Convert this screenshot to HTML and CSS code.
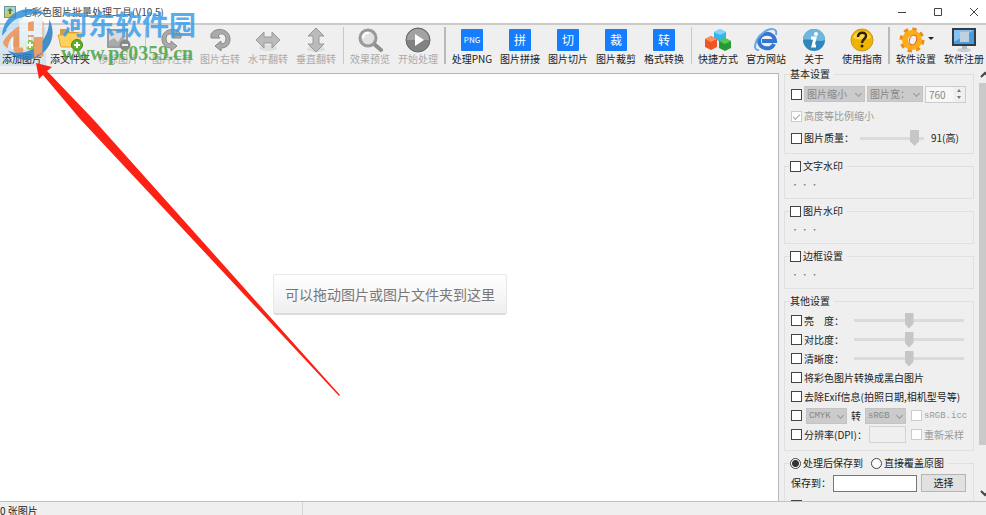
FILE: index.html
```html
<!DOCTYPE html>
<html lang="zh-CN">
<head>
    <meta charset="UTF-8">
    <meta name="viewport" content="width=device-width, initial-scale=1.0">
    <title>七彩色图片批量处理工具(V10.5)</title>
    <link rel="stylesheet" href="styles.css">
</head>
<body>
    <header class="titlebar">
        <svg class="app-icon" width="12" height="12" viewBox="0 0 12 12"><rect x=".5" y=".5" width="11" height="11" fill="#a9cfe0" stroke="#6f9a8a"/><path d="M1 11V8l3-2 7 3v2z" fill="#d9c35a"/><path d="M6 2l3 3H7v3H5V5H3z" fill="#3f8f2d"/></svg>
        <h1>七彩色图片批量处理工具(V10.5)</h1>
        <div class="window-buttons">
            <button aria-label="最小化"><svg width="10" height="10"><path d="M1 5.500h8" stroke="#444"/></svg></button>
            <button aria-label="最大化"><svg width="10" height="10"><path d="M1.500 1.500h7v7h-7z" fill="none" stroke="#444"/></svg></button>
            <button aria-label="关闭"><svg width="10" height="10"><path d="M1 1l8 8M9 1l-8 8" stroke="#444"/></svg></button>
        </div>
    </header>

    <nav class="toolbar">
        <button class="tool active">
            <svg width="26" height="26" viewBox="0 0 26 26"><rect x="3" y="3" width="18" height="18" fill="#b9dced" stroke="#f5f5f5" stroke-width="2"/><path d="M4 20v-6l5-4 6 5 5-2v7z" fill="#d2c184"/><circle cx="21" cy="18" r="5" fill="#8cc63f"/><path d="M21 15v6M18 18h6" stroke="#fff" stroke-width="2"/></svg>
            <span>添加图片</span>
        </button>
        <button class="tool">
            <svg width="26" height="26" viewBox="0 0 26 26"><path d="M3 2h8l2 3h9v14H3z" fill="#d99d2b"/><path d="M1 8h7l2-2h15l-4 14H4z" fill="#ffd35a" stroke="#e3a634"/><circle cx="20" cy="18" r="5.500" fill="#63ad2c" stroke="#438c1c"/><path d="M20 15v6M17 18h6" stroke="#fff" stroke-width="2"/></svg>
            <span>添文件夹</span>
        </button>
        <button class="tool" disabled>
            <svg width="26" height="26" viewBox="0 0 26 26"><path d="M3 3h19v17H3z" fill="#d9d9d9" stroke="#9c9c9c" stroke-width="2"/><path d="M4 19v-5l5-3 4 4 4-6 4 5v5z" fill="#aaa"/><circle cx="20" cy="18" r="5.500" fill="#888"/><path d="M17 18h6" stroke="#eee" stroke-width="2"/></svg>
            <span>移除图片</span>
        </button>
        <i class="separator"></i>
        <button class="tool" disabled>
            <svg width="26" height="26" viewBox="0 0 26 26"><path d="M22 7C17-1 3 2 3 12c0 6 4 9 9 9v3l6-5-6-5v3c-3 0-5-2-5-5 0-5 5-7 8-3l-2 2h9z" fill="#aaa" stroke="#888"/></svg>
            <span>图片左转</span>
        </button>
        <button class="tool" disabled>
            <svg width="26" height="26" viewBox="0 0 26 26"><path d="M4 7C9-1 23 2 23 12c0 6-4 9-9 9v3l-6-5 6-5v3c3 0 5-2 5-5 0-5-5-7-8-3l2 2H4z" fill="#aaa" stroke="#888"/></svg>
            <span>图片右转</span>
        </button>
        <button class="tool" disabled>
            <svg width="26" height="26" viewBox="0 0 26 26"><ellipse cx="13" cy="21" rx="9" ry="3" fill="#ddd"/><path d="M1 13l8-8v5h8V5l8 8-8 8v-5H9v5z" fill="#bbb" stroke="#999"/></svg>
            <span>水平翻转</span>
        </button>
        <button class="tool" disabled>
            <svg width="26" height="26" viewBox="0 0 26 26"><ellipse cx="13" cy="22" rx="9" ry="3" fill="#ddd"/><path d="M13 1l8 8h-5v8h5l-8 8-8-8h5V9H5z" fill="#bbb" stroke="#999"/></svg>
            <span>垂直翻转</span>
        </button>
        <i class="separator"></i>
        <button class="tool" disabled>
            <svg width="26" height="26" viewBox="0 0 26 26"><path d="M17 17l7 6" stroke="#8f8f8f" stroke-width="4" stroke-linecap="round"/><circle cx="11" cy="11" r="8" fill="#e2e2e2" stroke="#999" stroke-width="3"/><path d="M6 11c0-4 3-6 6-5" fill="none" stroke="#fff" stroke-width="2"/></svg>
            <span>效果预览</span>
        </button>
        <button class="tool" disabled>
            <svg width="26" height="26" viewBox="0 0 26 26"><circle cx="13" cy="13" r="12" fill="#828282" stroke="#666"/><path d="M2 13a11 11 0 0 1 22 0z" fill="#a2a2a2"/><path d="M10 7l9 6-9 6z" fill="#fff"/></svg>
            <span>开始处理</span>
        </button>
        <i class="separator dark"></i>
        <button class="tool"><b class="tile small">PNG</b><span>处理PNG</span></button>
        <button class="tool"><b class="tile">拼</b><span>图片拼接</span></button>
        <button class="tool"><b class="tile">切</b><span>图片切片</span></button>
        <button class="tool"><b class="tile">裁</b><span>图片裁剪</span></button>
        <button class="tool"><b class="tile">转</b><span>格式转换</span></button>
        <i class="separator"></i>
        <button class="tool">
            <svg width="26" height="26" viewBox="0 0 26 26"><path d="M15 2l6 3v6l-6 4-6-4V5z" fill="#34b5ee"/><path d="M15 2l6 3-6 3-6-3z" fill="#7fd8fb"/><path d="M6 9l6 3v8l-6 3-6-3v-8z" fill="#ee5426"/><path d="M6 9l6 3-6 3-6-3z" fill="#ff8f5e"/><path d="M20 11l6 3v7l-6 3-6-3v-7z" fill="#239a34"/><path d="M20 11l6 3-6 3-6-3z" fill="#59c751"/></svg>
            <span>快捷方式</span>
        </button>
        <button class="tool">
            <svg width="26" height="26" viewBox="0 0 26 26"><path d="M21 17c-3 7-15 5-15-3 0-9 15-10 16 0H9" fill="none" stroke="#3277d1" stroke-width="4"/><path d="M6 23C-1 24 2 12 10 6c6-5 15-6 13 2" fill="none" stroke="#6ba6e8" stroke-width="2"/></svg>
            <span>官方网站</span>
        </button>
        <button class="tool">
            <svg width="26" height="26" viewBox="0 0 26 26"><circle cx="13" cy="13" r="11" fill="#2f86bf"/><path d="M2 13a11 11 0 0 1 22 0c-6 3-14-2-22 0z" fill="#6db8dc"/><circle cx="15" cy="7" r="2" fill="#fff"/><path d="M10 11h4l-2 8h3" fill="none" stroke="#fff" stroke-width="3"/></svg>
            <span>关于</span>
        </button>
        <button class="tool">
            <svg width="26" height="26" viewBox="0 0 26 26"><circle cx="13" cy="13" r="11" fill="#f0b400" stroke="#c59a24"/><path d="M4 11c2-9 16-9 18 0-6 2-12 2-18 0z" fill="#ffd541"/><path d="M9 10c0-6 9-5 8-1 0 3-4 3-4 7" fill="none" stroke="#2c2100" stroke-width="2.500"/><circle cx="13" cy="19" r="1.500" fill="#2c2100"/></svg>
            <span>使用指南</span>
        </button>
        <i class="separator dark"></i>
        <button class="tool has-menu">
            <svg class="gear" width="26" height="26" viewBox="0 0 26 26"><circle cx="13" cy="13" r="10" fill="none" stroke="#ef8a16" stroke-width="5" stroke-dasharray="4 3.850"/><circle cx="13" cy="13" r="7" fill="none" stroke="#fbae18" stroke-width="6"/><ellipse cx="14" cy="13" rx="3.500" ry="5" transform="rotate(20 14 13)" fill="#efefef" stroke="#e6560f"/></svg>
            <span>软件设置</span>
        </button>
        <button class="tool">
            <svg width="26" height="26" viewBox="0 0 26 26"><ellipse cx="13" cy="23" rx="7" ry="2" fill="#c9cdd1"/><path d="M11 18h5v4h-5z" fill="#b5babf"/><rect x="2" y="2" width="22" height="16" fill="#4a9be0" stroke="#333c45" stroke-width="2"/><path d="M3 3h20L3 15z" fill="#83c2f2"/><rect x="9" y="5" width="9" height="10" fill="#bdd0df"/></svg>
            <span>软件注册</span>
        </button>
    </nav>

    <main class="workspace">
        <section class="canvas">
            <p class="drop-hint">可以拖动图片或图片文件夹到这里</p>
        </section>

        <aside class="settings">
            <fieldset>
                <legend>基本设置</legend>
                <div class="row">
                    <input type="checkbox" aria-label="图片缩小">
                    <div class="select wide"><select aria-label="缩放方式" disabled><option>图片缩小</option></select></div>
                    <div class="select medium"><select aria-label="缩放边" disabled><option>图片宽：</option></select></div>
                    <div class="spinner">
                        <input type="text" aria-label="宽度" value="760" disabled>
                        <svg width="12" height="14"><path d="M4 5l2-3 2 3zM4 9l2 3 2-3z" fill="#777"/></svg>
                    </div>
                </div>
                <div class="row">
                    <label class="disabled"><input type="checkbox" checked disabled>高度等比例缩小</label>
                </div>
                <div class="row">
                    <label><input type="checkbox">图片质量：</label>
                    <input class="short" type="range" aria-label="图片质量" value="91" disabled>
                    <output>91(高)</output>
                </div>
            </fieldset>

            <fieldset>
                <legend><label><input type="checkbox">文字水印</label></legend>
                <p class="dots">· · ·</p>
            </fieldset>
            <fieldset>
                <legend><label><input type="checkbox">图片水印</label></legend>
                <p class="dots">· · ·</p>
            </fieldset>
            <fieldset>
                <legend><label><input type="checkbox">边框设置</label></legend>
                <p class="dots">· · ·</p>
            </fieldset>

            <fieldset class="other">
                <legend>其他设置</legend>
                <div class="row">
                    <label><input type="checkbox">亮　度：</label>
                    <input type="range" aria-label="亮度" disabled>
                </div>
                <div class="row">
                    <label><input type="checkbox">对比度：</label>
                    <input type="range" aria-label="对比度" disabled>
                </div>
                <div class="row">
                    <label><input type="checkbox">清晰度：</label>
                    <input type="range" aria-label="清晰度" disabled>
                </div>
                <div class="row">
                    <label><input type="checkbox">将彩色图片转换成黑白图片</label>
                </div>
                <div class="row">
                    <label><input type="checkbox">去除Exif信息(拍照日期,相机型号等)</label>
                </div>
                <div class="row spaced">
                    <input type="checkbox" aria-label="转换色彩模式">
                    <div class="select mono"><select aria-label="源色彩" disabled><option>CMYK</option></select></div>
                    <span>转</span>
                    <div class="select mono"><select aria-label="目标色彩" disabled><option>sRGB</option></select></div>
                    <label class="disabled last mono"><input type="checkbox" disabled>sRGB.icc</label>
                </div>
                <div class="row">
                    <label><input type="checkbox">分辨率(DPI)：</label>
                    <input class="dpi" type="text" aria-label="DPI" disabled>
                    <label class="disabled last"><input type="checkbox" disabled>重新采样</label>
                </div>
            </fieldset>

            <fieldset class="save">
                <legend>
                    <label><input type="radio" name="save" checked>处理后保存到</label>
                    <label><input type="radio" name="save">直接覆盖原图</label>
                </legend>
                <div class="row">
                    <label for="path">保存到：</label>
                    <input id="path" class="path" type="text">
                    <button class="browse">选择</button>
                </div>
                <div class="row">
                    <input type="checkbox" aria-label="保存选项">
                </div>
            </fieldset>
        </aside>

        <div class="scrollbar">
            <svg width="12" height="15"><path d="M2 9l4-4 4 4" fill="none" stroke="#444" stroke-width="2"/></svg>
            <div class="thumb"></div>
            <svg width="12" height="15"><path d="M2 5l4 4 4-4" fill="none" stroke="#444" stroke-width="2"/></svg>
        </div>
    </main>

    <footer class="statusbar"><span>0 张图片</span></footer>

    <!-- site watermark -->
    <div class="watermark">
        <svg width="58" height="54" viewBox="0 0 58 56">
            <path d="M1 30C2 13 14 2 30 2c7 0 13 2 18 7-10-4-21-2-29 4C12 18 6 24 1 30z" fill="#2f8fd8"/>
            <path d="M5 24c5-9 12-13 17-13v31h-9V24z" fill="#c3e2f5"/>
            <path d="M2 36c8-13 20-20 35-22l7 1v36l-10 3V31H23v20l-10-5V30c-4 3-6 8-6 13-3-2-5-4-5-7z" fill="#ed9257"/>
            <path d="M19 13h9v12h6V10h9v21h-9v-2h-6v13h-9z" fill="#eaf4fb"/>
            <path d="M50 13c10 19-3 39-23 42-8 0-15-4-20-10 17 8 43-4 43-32z" fill="#277fc4"/>
            <path d="M34 31h9v16l-9 6z" fill="#ed9257"/>
        </svg>
        <div>
            <strong>河东软件园</strong>
            <em>www.pc0359.cn</em>
        </div>
    </div>

    <svg class="arrow" width="345" height="400" viewBox="0 0 345 400"><path d="M36 63l16 4-5 4 46 48 247 276-1 1L81 120 43 75l-4 4z" fill="#fb2114"/></svg>
</body>
</html>
```
FILE: styles.css
```css
* {
    box-sizing: border-box;
}
body {
    display: flex;
    flex-direction: column;
    height: 100vh;
    margin: 0;
    overflow: hidden;
    position: relative;
    background: #efefef;
    color: #222;
    font: 10px/12px "Noto Sans CJK SC", sans-serif;
}
button, input, select {
    margin: 0;
    font: inherit;
    color: inherit;
}
svg {
    display: block;
    flex: none;
}

/* title bar */
.titlebar {
    display: flex;
    align-items: center;
    flex: none;
    height: 25px;
    padding-left: 4px;
    background: #fff;
    border-bottom: 2px solid #cbcbcb;
}
.titlebar h1 {
    flex: 1;
    margin: 0 0 0 6px;
    font-size: 10px;
    font-weight: 400;
    color: #444;
}
.window-buttons {
    display: flex;
    gap: 26px;
    padding-right: 7px;
}
.window-buttons button {
    padding: 0;
    border: 0;
    background: none;
}

/* toolbar */
.toolbar {
    display: flex;
    flex: none;
    height: 43px;
    margin-left: -2px;
    padding-top: 2px;
}
.tool {
    display: flex;
    flex-direction: column;
    align-items: center;
    flex: none;
    width: 48px;
    height: 39px;
    padding: 0;
    border: 0;
    background: none;
    white-space: nowrap;
}
.tool:disabled {
    color: #aaa;
}
.tool.active {
    background: #d5e5ef;
}
.tool.has-menu {
    position: relative;
}
.tool.has-menu::after {
    content: "";
    position: absolute;
    top: 10px;
    right: 6px;
    border: 3px solid transparent;
    border-top-color: #222;
}
.gear {
    margin-right: 8px;
}
.tile {
    width: 22px;
    height: 22px;
    margin: 2px;
    border-radius: 1px;
    background: #167dff;
    color: #fff;
    font-size: 12px;
    font-weight: 400;
    line-height: 22px;
}
.tile.small {
    font-size: 8px;
}
.separator {
    flex: none;
    width: 1px;
    height: 37px;
    margin: 0 2px 0 3px;
    background: #c8c8c8;
}
.separator.dark {
    width: 2px;
    margin: 0 2px;
    background: #b9b9b9;
}

/* workspace */
.workspace {
    display: flex;
    flex: 1;
    min-height: 0;
}
.canvas {
    display: flex;
    align-items: center;
    justify-content: center;
    flex: 1;
    margin-top: 5px;
    background: #fff;
    border: 1px solid #b4b7bf;
    border-left: 0;
    border-bottom: 0;
}
.drop-hint {
    margin: 14px 0 0 2px;
    padding: 9px 11px;
    border: 1px solid #e8e8e8;
    border-bottom: 2px solid #dcdcdc;
    border-radius: 3px;
    background: linear-gradient(#fff, #efefef);
    color: #777;
    font-size: 14px;
    line-height: 20px;
}
.settings {
    display: flex;
    flex-direction: column;
    gap: 6px;
    flex: none;
    width: 200px;
    padding: 0 5px;
    overflow: hidden;
    white-space: nowrap;
}
fieldset {
    flex: none;
    min-width: 0;
    margin: 0;
    padding: 3px 6px 4px;
    border: 1px solid #e0e0e0;
}
legend {
    display: flex;
    gap: 8px;
    margin-left: -1px;
    padding: 0 4px 0 0;
}
label {
    display: flex;
    align-items: center;
    gap: 2px;
}
.row {
    display: flex;
    align-items: center;
    gap: 2px;
    height: 22px;
}
.other {
    padding: 4px 6px 6px;
}
.other .row {
    height: 19px;
}
.row.spaced {
    gap: 4px;
}
.last {
    margin-left: auto;
    width: 56px;
}
.disabled {
    color: #999;
}
.mono {
    font-family: "Liberation Mono", monospace;
    font-size: 9px;
}
.dots {
    height: 20px;
    margin: 0 0 -1px;
    color: #777;
    font-size: 8px;
    line-height: 20px;
}

/* form controls */
input[type="checkbox"], input[type="radio"] {
    appearance: none;
    flex: none;
    width: 11px;
    height: 11px;
    background: #fff;
    border: 1px solid #444;
}
input[type="radio"] {
    border-radius: 50%;
}
input[type="radio"]:checked {
    background: radial-gradient(#333 3px, #fff 4px);
}
input[type="checkbox"]:disabled {
    border-color: #ccc;
}
input[type="checkbox"]:checked::after {
    content: "";
    display: block;
    width: 6px;
    height: 3px;
    margin: 2px 1px;
    border: solid #aaa;
    border-width: 0 0 1px 1px;
    transform: rotate(-45deg);
}
.select {
    position: relative;
    width: 41px;
}
.select.wide {
    width: 61px;
}
.select.medium {
    width: 56px;
}
.select::after {
    content: "";
    position: absolute;
    top: 5px;
    right: 4px;
    width: 4px;
    height: 4px;
    border: solid #999;
    border-width: 0 1px 1px 0;
    transform: rotate(45deg);
}
select {
    display: block;
    appearance: none;
    width: 100%;
    height: 16px;
    padding: 0 2px;
    border: 1px solid #c4c4c4;
    border-radius: 0;
    background: #cbcbcb;
    line-height: 14px;
}
select:disabled {
    color: #888;
    opacity: 1;
}
input[type="text"] {
    min-width: 0;
    height: 17px;
    padding: 0 3px;
    border: 1px solid #777;
    background: #fff;
}
input[type="text"]:disabled {
    border-color: #d4d4d4;
    background: #efefef;
    color: #888;
}
.spinner {
    display: flex;
    align-items: center;
    width: 41px;
    border: 1px solid #ccc;
}
.spinner input[type="text"] {
    flex: 1;
    height: 15px;
    border: 0;
    background: #f7f7f7;
}
input[type="range"] {
    appearance: none;
    width: 110px;
    height: 16px;
    margin-left: auto;
    margin-right: 3px;
    background: linear-gradient(#d9dcdb, #d9dcdb) center / 100% 3px no-repeat;
}
input[type="range"].short {
    width: 64px;
    margin: 0 5px 0 auto;
}
input[type="range"]::-webkit-slider-thumb {
    appearance: none;
    width: 9px;
    height: 16px;
    background: #c6c6c6;
    clip-path: polygon(0 0, 100% 0, 100% 70%, 50% 100%, 0 70%);
}
output {
    width: 36px;
}
.dpi {
    width: 37px;
    margin-left: auto;
}
.dpi + .last {
    margin-left: 3px;
}
.path {
    width: 84px;
    margin-left: auto;
}
.browse {
    width: 45px;
    height: 18px;
    margin: 0 1px 0 2px;
    padding: 0;
    border: 1px solid #b5b5b5;
    background: #e1e1e1;
}
.scrollbar {
    display: flex;
    flex-direction: column;
    flex: none;
    width: 7px;
    overflow: hidden;
}
.thumb {
    height: 90%;
    max-height: 362px;
    margin-bottom: auto;
    background: #c9c9c9;
}

/* status bar */
.statusbar {
    flex: none;
    height: 14px;
    overflow: hidden;
    border-top: 1px solid #bcc0c7;
}
.statusbar span {
    display: block;
    width: 303px;
    height: 13px;
    padding-top: 3px;
    border-right: 1px solid #d5d5d5;
}

/* overlays */
.watermark {
    position: absolute;
    top: 7px;
    left: 0;
    display: flex;
    gap: 3px;
    opacity: .85;
    pointer-events: none;
}
.watermark strong, .watermark em {
    display: block;
    font-style: normal;
    white-space: nowrap;
}
.watermark strong {
    color: #3c9fea;
    font-size: 27px;
    line-height: 34px;
}
.watermark em {
    color: #4ba446;
    font: bold 20px/24px "Liberation Serif", serif;
}
.arrow {
    position: absolute;
    top: 0;
    left: 0;
    pointer-events: none;
}
```
